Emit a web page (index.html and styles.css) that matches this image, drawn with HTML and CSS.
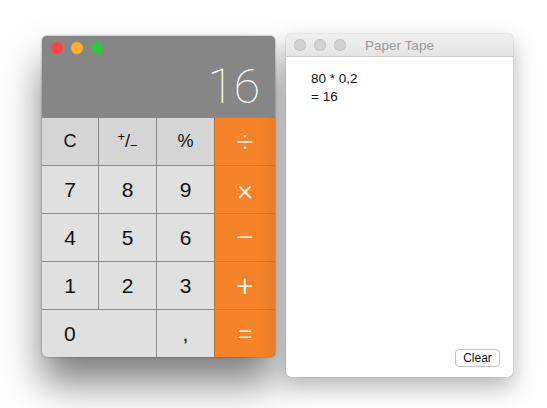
FILE: index.html
```html
<!DOCTYPE html>
<html lang="en">
<head>
    <meta charset="UTF-8">
    <title>Calculator</title>
    <link rel="stylesheet" href="styles.css">
</head>
<body>
    <div class="calc">
        <div class="display">
            <div class="lights">
                <span class="light red"></span>
                <span class="light yellow"></span>
                <span class="light green"></span>
            </div>
            <div class="result">16</div>
        </div>
        <div class="keys">
            <div class="key fn">C</div>
            <div class="key fn"><span class="up">+</span>/<span class="down">&minus;</span></div>
            <div class="key fn">%</div>
            <div class="key op">&divide;</div>
            <div class="key">7</div>
            <div class="key">8</div>
            <div class="key">9</div>
            <div class="key op">&times;</div>
            <div class="key">4</div>
            <div class="key">5</div>
            <div class="key">6</div>
            <div class="key op"><span class="wide">&minus;</span></div>
            <div class="key">1</div>
            <div class="key">2</div>
            <div class="key">3</div>
            <div class="key op">+</div>
            <div class="key zero">0</div>
            <div class="key">,</div>
            <div class="key op">=</div>
        </div>
    </div>

    <div class="tape">
        <div class="titlebar">
            <div class="lights">
                <span class="light off"></span>
                <span class="light off"></span>
                <span class="light off"></span>
            </div>
            <span class="title">Paper Tape</span>
        </div>
        <div class="tape-body">
            <div class="lines">
                <div>80 * 0,2</div>
                <div>= 16</div>
            </div>
            <button class="clear">Clear</button>
        </div>
    </div>
</body>
</html>
```

FILE: styles.css
```css
body {
    margin: 0;
    padding: 34px 0 0 42px;
    background-color: #ffffff;
    font-family: "Liberation Sans", Arial, sans-serif;
    display: flex;
    align-items: flex-start;
    gap: 11px;
    height: 408px;
    box-sizing: border-box;
    overflow: hidden;
}
.calc {
    margin-top: 2px;
    width: 233px;
    height: 321px;
    border-radius: 5px;
    overflow: hidden;
    background-color: #858585;
    box-shadow: 0 26px 38px rgba(0, 0, 0, 0.5), 0 0 2px rgba(0, 0, 0, 0.5);
    display: flex;
    flex-direction: column;
}
.display {
    height: 81px;
    position: relative;
    box-sizing: border-box;
    background-color: #868686;
}
.lights {
    position: absolute;
    top: 6px;
    left: 9px;
    display: flex;
    gap: 8px;
}
.light {
    width: 12px;
    height: 12px;
    border-radius: 50%;
    display: block;
}
.red { background-color: #fc4442; }
.yellow { background-color: #fdb126; }
.green { background-color: #2bc83a; }
.result {
    position: absolute;
    right: 15px;
    top: 27px;
    color: #ffffff;
    font-family: Roboto, sans-serif;
    font-weight: 100;
    font-size: 48px;
    line-height: 1;
}
.keys {
    flex: 1;
    display: grid;
    grid-template-columns: 56px 57px 57px 1fr;
    grid-template-rows: repeat(5, 47px);
    gap: 1px;
    padding-top: 1px;
    background-color: #8a8a8a;
}
.key {
    background-color: #e0e0e0;
    color: #111111;
    font-size: 21px;
    display: flex;
    align-items: center;
    justify-content: center;
}
.fn {
    background-color: #d5d5d5;
    font-size: 18px;
}
.up {
    font-size: 13px;
    position: relative;
    top: -5px;
}
.down {
    font-size: 13px;
    position: relative;
    top: 4px;
}
.op {
    background-color: #f4832a;
    color: #fff8ee;
    font-family: Roboto, sans-serif;
    font-size: 30px;
    font-weight: 300;
    box-shadow: -1px 0 0 #c06a2a;
}
.wide {
    display: inline-block;
    transform: scaleX(1.2);
}
.zero {
    grid-column: span 2;
    justify-content: flex-start;
    padding-left: 22px;
}
.tape {
    width: 227px;
    height: 343px;
    border-radius: 5px;
    overflow: hidden;
    background-color: #ffffff;
    box-shadow: 0 10px 24px rgba(0, 0, 0, 0.3), 0 0 1px rgba(0, 0, 0, 0.5);
    display: flex;
    flex-direction: column;
}
.titlebar {
    height: 22px;
    position: relative;
    background: linear-gradient(#f0f0f0, #e4e4e4);
    border-bottom: 1px solid #cfcfcf;
    display: flex;
    align-items: center;
    justify-content: center;
}
.titlebar .lights {
    top: 5px;
    left: 8px;
}
.off {
    background-color: #d2d2d2;
    box-shadow: inset 0 0 0 1px #c4c4c4;
}
.title {
    color: #9c9c9c;
    font-size: 13.5px;
}
.tape-body {
    flex: 1;
    display: flex;
    flex-direction: column;
    justify-content: space-between;
    align-items: flex-end;
    padding: 13px 13px 10px 25px;
}
.lines {
    align-self: flex-start;
    font-size: 13.5px;
    line-height: 18px;
    color: #111111;
}
.clear {
    width: 45px;
    height: 18px;
    padding: 0;
    background-color: #ffffff;
    border: 1px solid #c4c4c4;
    border-radius: 4px;
    font-family: "Liberation Sans", Arial, sans-serif;
    font-size: 12px;
    color: #111111;
}
```
